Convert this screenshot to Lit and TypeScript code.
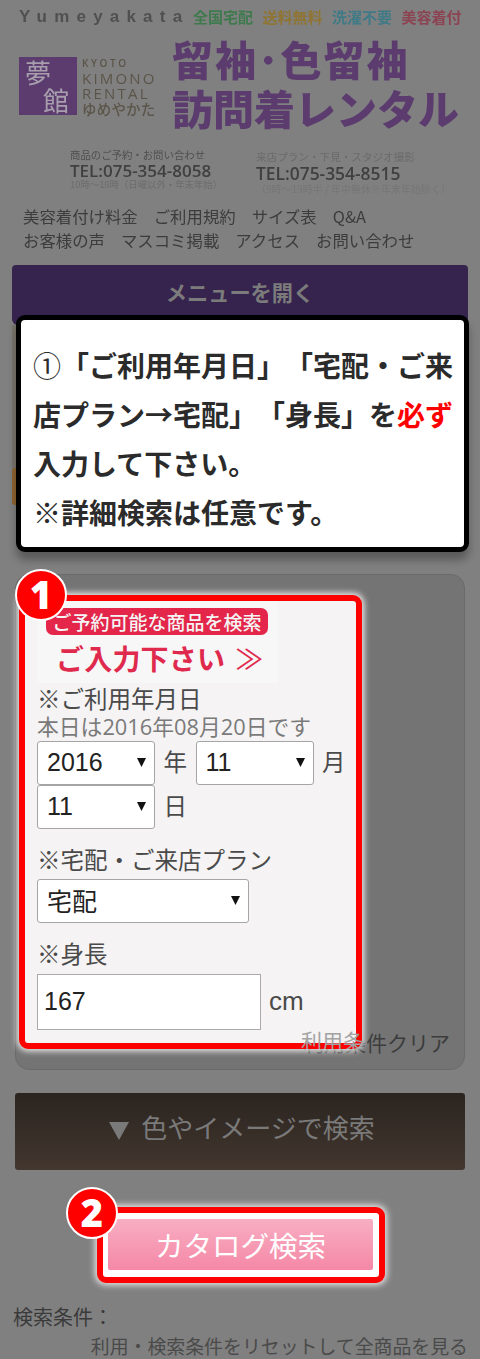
import { LitElement, html, css } from "lit";
import { customElement } from "lit/decorators.js";

@customElement("app-root")
export class AppRoot extends LitElement {
  static styles = css`
    :host { display: block; width: 480px; height: 1359px; position: relative; overflow: hidden; background: #808080;
      font-family: "Noto Sans CJK JP", "Liberation Sans", sans-serif; color: #333; text-spacing-trim: space-all; }
    .page { padding: 5px 0 0; display: flex; flex-direction: column; }
    .topline { display: flex; align-items: center; height: 24px; padding-left: 19px; font-weight: 700; filter: blur(0.4px); }
    .brand { font-family: "Liberation Sans", sans-serif; font-size: 17px; letter-spacing: 7.2px; color: #505050; width: 174px; white-space: nowrap; }
    .tags { display: flex; gap: 9.5px; font-size: 15px; line-height: 20px; }
    .tags span:nth-child(1) { color: #3f7a4e; }
    .tags span:nth-child(2) { color: #8f7432; }
    .tags span:nth-child(3) { color: #3f7a86; }
    .tags span:nth-child(4) { color: #8c4352; }
    .tags span { width: 60px; white-space: nowrap; }
    .logo-row { display: flex; height: 96px; padding: 5px 0 0 19px; box-sizing: border-box; filter: blur(0.5px); }
    .mark { flex: none; width: 58px; height: 58px; margin-top: 23px; background: #5c3c6e; color: #a89fae; font-size: 26px; line-height: 28px; display: flex; flex-direction: column; align-items: flex-start; font-weight: 400; padding: 1px 0 0 6px; box-sizing: border-box; }
    .mark span:last-child { margin-left: 18px; }
    .kimono { flex: none; margin: 22px 0 0 5px; width: 90px; font-family: "Open Sans", "Liberation Sans", sans-serif; color: #5b5449; font-size: 15px; line-height: 15px; letter-spacing: 2.2px; white-space: nowrap; }
    .kimono small { display: block; font-size: 10px; line-height: 15px; letter-spacing: 2.6px; font-weight: 600; }
    .kimono b { display: block; font-weight: 400; }
    .kimono i { display: block; font-style: normal; font-size: 14.5px; line-height: 15px; letter-spacing: 0.2px; font-family: "Noto Sans CJK JP", sans-serif; font-weight: 500; }
    .title { color: #5c3c6e; font-weight: 900; font-size: 41px; line-height: 49px; white-space: nowrap; }
    .title div:first-child { letter-spacing: 2px; }
    .phones { display: flex; height: 79px; padding: 23px 0 0 70px; box-sizing: border-box; filter: blur(0.5px); }
    .ph1 { width: 186px; flex: none; }
    .ph { white-space: nowrap; }
    .ph small { display: block; font-size: 10.4px; line-height: 14px; color: #4f4f4f; }
    .ph b { display: block; font-family: "Open Sans", "Liberation Sans", sans-serif; font-size: 17px; line-height: 17px; font-weight: 600; color: #404040; }
    .ph em { display: block; font-style: normal; font-size: 9.4px; line-height: 11px; color: #6c6c6c; }
    .ph2 { margin-top: 2px; }
    .ph2 small { color: #6a6a6a; font-size: 10.6px; }
    .ph2 b { font-size: 17.4px; line-height: 19px; }
    .ph2 em { font-size: 10px; line-height: 12px; color: #757575; }
    .nav { padding-left: 23px; font-size: 16.4px; line-height: 24px; color: #3c3c3c; }
    .nav div { display: flex; gap: 16px; white-space: nowrap; filter: blur(0.3px); }
    .menu { margin: 13px 12px 0; height: 60px; background: #36244e; border-radius: 4px 4px 6px 6px; color: #7b7b7b; font-weight: 700; font-size: 21.2px; display: flex; justify-content: center; padding-top: 10px; box-sizing: border-box; line-height: 34px; }
    .hidden-space { height: 249px; padding-left: 12px; box-sizing: border-box; }
    .strip { width: 6px; height: 143px; background: #7b766c; }
    .strip.orange { height: 37px; background: #8f6530; border-radius: 3px 0 0 3px; }
    .panel { margin: 0 15px; height: 496px; box-sizing: border-box; border: 1px solid #6a6a6a; border-radius: 14px; background: #747474; position: relative; }
    .clear { position: absolute; right: 14px; bottom: 13px; font-size: 21px; line-height: 28px; color: #3c3c3c; white-space: nowrap; }
    .brown { margin: 23px 15px 0; height: 77px; padding-left: 4px; box-sizing: border-box; border-radius: 3px; background: linear-gradient(#2a2420, #43372f); color: #7a7a7a; font-size: 26px; line-height: 68px; display: flex; justify-content: center; gap: 12px; white-space: nowrap; }
    .brown svg { display: block; width: 20px; height: 18px; margin-top: 29px; }
    .cond { margin: 134px 0 0 13px; font-size: 20px; line-height: 26px; color: #3a3a3a; }
    .reset { margin: 3px 12px 0 0; text-align: right; font-size: 18.9px; line-height: 26px; color: #4a4a4a; white-space: nowrap; }

    .modal { position: absolute; left: 16px; top: 315px; width: 453px; height: 237px; box-sizing: border-box; border: 5px solid #000; border-radius: 9px; background: #fff; padding: 21px 0 0 12px; box-shadow: 0 8px 8px rgba(0,0,0,.3); font-weight: 700; font-size: 28px; line-height: 49px; color: #2b2b2b; }
    .modal div { white-space: nowrap; }
    .modal .req { color: #f00; }
    .modal .thin { font-weight: 400; }

    .hl { position: absolute; left: 19px; top: 595px; width: 343px; height: 454px; box-sizing: border-box; border: 6px solid #f00; border-radius: 9px; background: #f5f3f4; box-shadow: 0 0 6px 2px #eeeeee; padding: 0 0 0 12px; color: #4a4a4a; font-size: 23.5px; }
    .ghost { position: absolute; left: 276px; top: 425px; height: 23px; overflow: hidden; font-size: 21px; line-height: 28px; color: #a2a2a2; white-space: nowrap; }
    .banner { width: 241px; height: 82px; background: #f8f7f8; position: relative; }
    .pill { position: absolute; left: 9px; top: 7px; width: 222px; height: 27px; background: #e3264a; border-radius: 7px; color: #f4f4f4; font-size: 19px; font-weight: 500; line-height: 27px; text-align: center; white-space: nowrap; }
    .enter { position: absolute; left: 19px; top: 37px; color: #df2a4d; font-weight: 700; font-size: 28px; letter-spacing: 0.2px; line-height: 40px; white-space: nowrap; display: flex; gap: 10px; }
    .enter span:last-child { font-weight: 400; }
    .lab { line-height: 27px; padding-bottom: 3px; white-space: nowrap; margin-top: 17px; }
    .lab.first { margin-top: 2px; }
    .today { font-size: 21.8px; line-height: 24px; padding-bottom: 2px; color: #7a7a7a; white-space: nowrap; font-family: "Open Sans", "Noto Sans CJK JP", sans-serif; }
    .row { display: flex; align-items: center; gap: 8.5px; height: 44px; }
    .row.tight { margin-top: 3px; }
    .sel { height: 44px; box-sizing: border-box; border: 1px solid #a5a5a5; border-radius: 3px; background: #fff; width: 118px; display: flex; align-items: center; justify-content: space-between; padding: 0 8px 2px 9px; font-size: 25px; color: #222; font-family: "Liberation Sans", "Noto Sans CJK JP", sans-serif; }
    .sel svg { width: 9px; height: 9px; display: block; }
    .sel.wide { width: 212px; font-family: "Noto Sans CJK JP", sans-serif; }
    .unit { font-size: 23.5px; padding-bottom: 5px; }
    .input { width: 224px; height: 56px; box-sizing: border-box; border: 1px solid #aaa; background: #fff; font-family: "Liberation Sans", sans-serif; font-size: 25px; color: #222; display: flex; align-items: center; padding: 0 0 2px 6px; }
    .hrow { display: flex; align-items: center; gap: 8px; margin-top: 4px; }
    .cm { font-family: "Liberation Sans", sans-serif; font-size: 26px; padding-bottom: 2px; }

    .hl2 { position: absolute; left: 97px; top: 1207px; width: 288px; height: 76px; box-sizing: border-box; border: 6px solid #f00; border-radius: 9px; background: #fff; box-shadow: 0 0 6px 2px #e8e8e8; padding: 6px 6px 7px 5px; }
    .pink { height: 51px; border-radius: 2px; background: linear-gradient(#f8aec3, #f588a6); color: #fff; font-size: 28.5px; display: flex; align-items: center; justify-content: center; white-space: nowrap; }
    .badge { position: absolute; width: 52px; height: 52px; box-sizing: border-box; border: 2px solid #fff; border-radius: 50%; background: #f00; color: #fff; font-family: "Open Sans", "Liberation Sans", sans-serif; font-weight: 800; font-size: 38px; line-height: 46px; display: flex; justify-content: center; }
    .b1 { left: 15px; top: 569px; }
    .b2 { left: 66px; top: 1187px; }
  `;

  arrow() {
    return html`<svg viewBox="0 0 9 9"><path d="M0 0H9L4.5 9Z" fill="#111"/></svg>`;
  }

  render() {
    return html`
      <div class="page">
        <div class="topline">
          <div class="brand">Yumeyakata</div>
          <div class="tags"><span>全国宅配</span><span>送料無料</span><span>洗濯不要</span><span>美容着付</span></div>
        </div>
        <div class="logo-row">
          <div class="mark"><span>夢</span><span>館</span></div>
          <div class="kimono"><small>KYOTO</small><b>KIMONO</b><b>RENTAL</b><i>ゆめやかた</i></div>
          <div class="title"><div>留袖･色留袖</div><div>訪問着レンタル</div></div>
        </div>
        <div class="phones">
          <div class="ph ph1"><small>商品のご予約・お問い合わせ</small><b>TEL:075-354-8058</b><em>10時〜18時（日曜以外・年末年始）</em></div>
          <div class="ph ph2"><small>来店プラン・下見・スタジオ撮影</small><b>TEL:075-354-8515</b><em>（9時〜19時半 / 年中無休※年末年始除く）</em></div>
        </div>
        <div class="nav">
          <div><span>美容着付け料金</span><span>ご利用規約</span><span>サイズ表</span><span>Q&amp;A</span></div>
          <div><span>お客様の声</span><span>マスコミ掲載</span><span>アクセス</span><span>お問い合わせ</span></div>
        </div>
        <div class="menu">メニューを開く</div>
        <div class="hidden-space"><div class="strip"></div><div class="strip orange"></div></div>
        <div class="panel"><div class="clear">利用条件クリア</div></div>
        <div class="brown"><svg viewBox="0 0 20 18"><path d="M0 0H20L10 18Z" fill="#7a7a7a"/></svg><span>色やイメージで検索</span></div>
        <div class="cond">検索条件：</div>
        <div class="reset">利用・検索条件をリセットして全商品を見る</div>
      </div>

      <div class="modal">
        <div><span class="thin">①</span>「ご利用年月日」「宅配・ご来</div>
        <div>店プラン→宅配」「身長」を<span class="req">必ず</span></div>
        <div>入力して下さい。</div>
        <div>※詳細検索は任意です。</div>
      </div>

      <div class="hl">
        <div class="banner">
          <div class="pill">ご予約可能な商品を検索</div>
          <div class="enter"><span>ご入力下さい</span><span>≫</span></div>
        </div>
        <div class="lab first">※ご利用年月日</div>
        <div class="today">本日は2016年08月20日です</div>
        <div class="row"><div class="sel"><span>2016</span>${this.arrow()}</div><span class="unit">年</span><div class="sel"><span>11</span>${this.arrow()}</div><span class="unit">月</span></div>
        <div class="row"><div class="sel"><span>11</span>${this.arrow()}</div><span class="unit">日</span></div>
        <div class="lab">※宅配・ご来店プラン</div>
        <div class="row tight"><div class="sel wide"><span>宅配</span>${this.arrow()}</div></div>
        <div class="lab">※身長</div>
        <div class="hrow"><div class="input">167</div><span class="cm">cm</span></div>
        <div class="ghost">利用条</div>
      </div>

      <div class="hl2"><div class="pink">カタログ検索</div></div>
      <div class="badge b1">1</div>
      <div class="badge b2">2</div>
    `;
  }
}
